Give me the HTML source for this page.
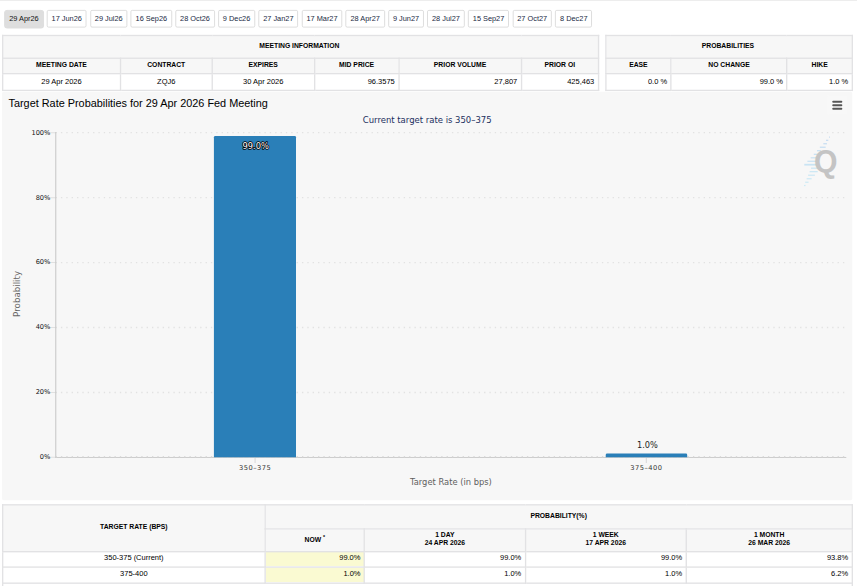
<!DOCTYPE html>
<html lang="en">
<head>
<meta charset="utf-8">
<title>Target Rate Probabilities</title>
<style>
html,body{margin:0;padding:0;background:#fff;overflow:hidden;}
body{width:857px;height:586px;position:relative;font-family:"Liberation Sans",Arial,sans-serif;}
#w{position:absolute;left:0;top:0;width:1280px;height:876px;transform:scale(0.66953);transform-origin:0 0;font-size:12px;color:#111;}
#topline{position:absolute;left:0;top:0;width:1280px;height:0;border-bottom:1.3px solid #e4e4e4;}
#tabs{position:absolute;left:6.7px;top:15px;white-space:nowrap;font-size:0;}
#tabs span{display:inline-block;box-sizing:border-box;height:26px;line-height:24px;padding:0 6px;border:1px solid #cdcdcd;border-radius:2.5px;background:#fff;color:#1a2a44;font-size:11px;margin-right:5.3px;}
#tabs span.on{background:#dedede;border-color:#dedede;color:#111;border-radius:4px;box-shadow:0 0.6px 0 0.8px #dedede;}
table{border-collapse:collapse;table-layout:fixed;position:absolute;font-size:11px;}
td,th{border:2px solid #e2e2e4;padding:0 6px;overflow:hidden;white-space:nowrap;}
th{background:#f7f7f7;font-weight:bold;font-size:10.15px;text-align:center;color:#000;}
td{background:#fff;color:#000;font-size:11.2px;}
#t3 .h2 th{padding-bottom:4.6px;line-height:11.6px;}
#t3 .d1 td{padding-bottom:6.4px;}
#t3 .d2 td{padding-bottom:4.4px;}
#t1 tr:nth-child(2) th,#t2 tr:nth-child(2) th{padding-bottom:4.6px;}
#t1 tr:nth-child(1) th,#t2 tr:nth-child(1) th{padding-bottom:3px;padding-right:9px;}
.r{text-align:right;padding-right:5px;}
.c{text-align:center;}
td.y{background:#fafad2;}
#chart{position:absolute;left:3px;top:137.2px;width:1270px;height:609.8px;background:#f7f7f7;border-radius:2.5px;}
#chart svg{position:absolute;left:-3px;top:-137.2px;}
.dv{font-family:"DejaVu Sans",Verdana,sans-serif;}
</style>
</head>
<body>
<div id="w">
<div id="topline"></div>
<div id="tabs"><span class="on">29 Apr26</span><span>17 Jun26</span><span>29 Jul26</span><span>16 Sep26</span><span>28 Oct26</span><span>9 Dec26</span><span>27 Jan27</span><span>17 Mar27</span><span>28 Apr27</span><span>9 Jun27</span><span>28 Jul27</span><span>15 Sep27</span><span>27 Oct27</span><span>8 Dec27</span></div>

<table id="t1" style="left:2.7px;top:51.7px;width:890px;">
<colgroup><col style="width:176.3px"><col style="width:136.6px"><col style="width:153px"><col style="width:126px"><col style="width:183px"><col style="width:115px"></colgroup>
<tr style="height:34.5px"><th colspan="6">MEETING INFORMATION</th></tr>
<tr style="height:22.4px"><th>MEETING DATE</th><th>CONTRACT</th><th>EXPIRES</th><th>MID PRICE</th><th>PRIOR VOLUME</th><th>PRIOR OI</th></tr>
<tr style="height:25.3px"><td class="c">29 Apr 2026</td><td class="c">ZQJ6</td><td class="c">30 Apr 2026</td><td class="r">96.3575</td><td class="r">27,807</td><td class="r">425,463</td></tr>
</table>

<table id="t2" style="left:903.7px;top:51.7px;width:368px;">
<colgroup><col style="width:97.6px"><col style="width:173.2px"><col style="width:97.3px"></colgroup>
<tr style="height:34.5px"><th colspan="3">PROBABILITIES</th></tr>
<tr style="height:22.4px"><th>EASE</th><th>NO CHANGE</th><th>HIKE</th></tr>
<tr style="height:25.3px"><td class="r">0.0 %</td><td class="r">99.0 %</td><td class="r">1.0 %</td></tr>
</table>

<div id="chart">
<svg width="1280" height="876" viewBox="0 0 1280 876">
<text x="12.7" y="159.8" font-family="Liberation Sans, Arial, sans-serif" font-size="16.28" fill="#000">Target Rate Probabilities for 29 Apr 2026 Fed Meeting</text>
<text class="dv" x="638.1" y="183" font-size="12.67" fill="#1b2f5e" text-anchor="middle">Current target rate is 350–375</text>
<!-- grid -->
<g stroke="#e2e2e2" stroke-width="2" stroke-dasharray="2 6" fill="none">
<path d="M83 198.2H1264"/><path d="M83 295.2H1264"/><path d="M83 392.2H1264"/><path d="M83 489.2H1264"/><path d="M83 586.2H1264"/>
</g>
<path d="M73 198.2H83M73 295.2H83M73 392.2H83M73 489.2H83M73 586.2H83M73 683H83" stroke="#e0e0e0" stroke-width="1.5" fill="none"/>
<path d="M83.3 197.2V683.8" stroke="#c6c6c6" stroke-width="1.5" fill="none"/>
<path d="M82.6 683.3H1264" stroke="#c6c6c6" stroke-width="1.3" fill="none"/>
<path d="M83 682.6H1264" stroke="#d2d2d2" stroke-width="2" stroke-dasharray="2 6" fill="none"/>
<path d="M381 684V691.5M965.3 684V691.5" stroke="#d8d8d8" stroke-width="1.5" fill="none"/>
<!-- bars -->
<path d="M319.5 683V205a2 2 0 0 1 2-2H440.1a2 2 0 0 1 2 2V683Z" fill="#2a7fb8"/>
<path d="M904.7 683V679.5a2 2 0 0 1 2-2H1024.4a2 2 0 0 1 2 2V683Z" fill="#2a7fb8"/>
<!-- y labels -->
<g class="dv" font-size="9.9" fill="#111" text-anchor="end" letter-spacing="0">
<text x="75.2" y="201.0">100%</text><text x="75.2" y="298.0">80%</text><text x="75.2" y="395.0">60%</text><text x="75.2" y="492.0">40%</text><text x="75.2" y="589.0">20%</text><text x="75.2" y="686.0">0%</text>
</g>
<g class="dv" font-size="10" fill="#333" text-anchor="middle" letter-spacing="0.75">
<text x="381" y="702">350–375</text><text x="965.5" y="702">375–400</text>
</g>
<text class="dv" x="673.5" y="724.2" font-size="12.45" fill="#606060" text-anchor="middle">Target Rate (in bps)</text>
<text class="dv" transform="translate(30 439) rotate(-90)" font-size="13" fill="#666" text-anchor="middle">Probability</text>
<!-- data labels -->
<text class="dv" x="381.8" y="222" font-size="12.4" fill="#fff" stroke="#000" stroke-width="2.4" stroke-linejoin="round" paint-order="stroke" text-anchor="middle">99.0%</text>
<text class="dv" x="967" y="669.3" font-size="12.3" fill="#222" text-anchor="middle">1.0%</text>
<!-- menu -->
<rect x="1235.6" y="142.2" width="28.5" height="29" rx="2" fill="#f8f8f8"/>
<g stroke="#555" stroke-width="3" stroke-linecap="round"><path d="M1244.5 151.9H1256.6M1244.5 157.2H1256.6M1244.5 162.5H1256.6"/></g>
<!-- Q logo -->
<g stroke-width="1.8" fill="none" opacity="0.72">
<path d="M1238.2 204.9H1239.5" stroke="#b0d0f0"/>
<path d="M1233.7 209.6H1237.1" stroke="#b1d1f0"/>
<path d="M1229.7 214.7H1235.1" stroke="#b2d3f0"/>
<path d="M1224.5 219.9H1233.2" stroke="#b3d5f1"/>
<path d="M1220.2 225.1H1226.1" stroke="#b4d6f1"/>
<path d="M1215.5 230.5H1221.3" stroke="#b5d8f2"/>
<path d="M1210.8 235.7H1221.3" stroke="#b6daf2"/>
<path d="M1205.9 240.9H1221.3" stroke="#b7dcf3"/>
<path d="M1201.3 246.0H1221.3" stroke="#b8ddf3" stroke-width="2.6"/>
<path d="M1211.4 251.2H1221.3" stroke="#b9dff3"/>
<path d="M1209.2 256.4H1221.3" stroke="#bae1f4"/>
<path d="M1207.0 261.7H1217.1" stroke="#bbe2f4"/>
<path d="M1204.8 267.0H1212.3" stroke="#bce4f5"/>
<path d="M1202.6 272.2H1207.6" stroke="#bde6f5"/>
<path d="M1200.8 277.1H1203.2" stroke="#bee8f6"/>
</g>
<text id="qlogo" transform="translate(1233.4 257.6) scale(0.98 1)" font-family="Liberation Sans, Arial, sans-serif" font-weight="bold" font-size="46" fill="#c4c4c4" text-anchor="middle">Q</text>
</svg>
</div>

<table id="t3" style="left:2.7px;top:753.4px;width:1269px;">
<colgroup><col style="width:392.4px"><col style="width:148.3px"><col style="width:240.2px"><col style="width:240.3px"><col style="width:247.9px"></colgroup>
<tr style="height:35.2px"><th rowspan="2" style="padding-bottom:6px">TARGET RATE (BPS)</th><th colspan="4" style="padding-bottom:3px">PROBABILITY(%)</th></tr>
<tr class="h2" style="height:34.5px"><th>NOW <sup style="font-size:8px">*</sup></th><th>1 DAY<br>24 APR 2026</th><th>1 WEEK<br>17 APR 2026</th><th>1 MONTH<br>26 MAR 2026</th></tr>
<tr class="d1" style="height:23.2px"><td class="c">350-375 (Current)</td><td class="r y">99.0%</td><td class="r">99.0%</td><td class="r">99.0%</td><td class="r">93.8%</td></tr>
<tr class="d2" style="height:23.3px"><td class="c">375-400</td><td class="r y">1.0%</td><td class="r">1.0%</td><td class="r">1.0%</td><td class="r">6.2%</td></tr>
<tr style="height:12px"><td colspan="5"></td></tr>
</table>
</div>
</body>
</html>
